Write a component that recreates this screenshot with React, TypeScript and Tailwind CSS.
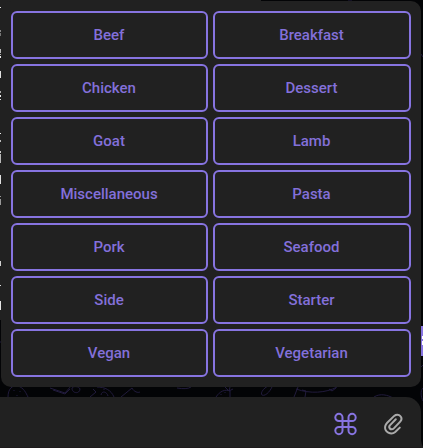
import React from "react";

const categories = [
  "Beef", "Breakfast", "Chicken", "Dessert", "Goat", "Lamb", "Miscellaneous",
  "Pasta", "Pork", "Seafood", "Side", "Starter", "Vegan", "Vegetarian",
];

// Visible edges of the message glyphs behind the keyboard panel: [top, height, colour]
const slivers: [number, number, string][] = [
  [7, 1, "#e8e8e8"], [30, 2, "#888888"], [33, 3, "#777777"],
  [49, 4, "#b8b8b8"], [54, 1, "#b0b0b0"], [56, 2, "#f0f0f0"],
  [71, 7, "#e0e0e0"], [91, 2, "#aaaaaa"], [95, 2, "#eeeeee"], [99, 1, "#dddddd"],
  [133, 1, "#eeeeee"], [140, 2, "#bbbbbb"], [151, 2, "#cccccc"], [154, 9, "#b8b8b8"],
  [175, 9, "#e0e0e0"], [196, 1, "#999999"], [199, 6, "#999999"],
  [261, 5, "#d0d0d0"], [285, 1, "#dddddd"], [301, 9, "#e4e4e4"],
];

// Chat backdrop: doodle wallpaper with the edges of the messages on it
function Backdrop() {
  return (
    <svg className="absolute inset-0 h-full w-full" viewBox="0 0 423 448" fill="none">
      <g stroke="#211b3c" strokeWidth="1">
        <path d="M8 397C8 389 12 385 18 386C24 388 26 393 28 397M14 390v1M20 391v1M17 395v1" />
        <path d="M50 388L65 393L71 386M53 390L65 394L70 389M72 388C72 394 80 394 80 389C79 386 73 386 72 388" />
        <path d="M90 397L96 392L93 389M97 387C105 387 111 390 114 397M101 395C102 390 107 392 108 396M104 389v1" />
        <path d="M121 397L132 388C134 392 138 393 140 392M177 388C183 389 188 389 191 387" />
        <path d="M216 397C220 391 225 389 230 391V397M221 394v1M225 392v1M228 390L225 387M229 391L230 387M229 391L233 389" />
        <path d="M274 384C263 386 260 394 262 395C266 397 272 389 273 384" />
        <path d="M298 387L294 397M302 390L306 391L305 397M296 389C310 394 326 393 337 387M329 389L332 391L336 388M374 397C380 393 388 395 393 398" />
        <path d="M423 388C420 391 421 397 423 401M348 0h4M421 54l2 3M0 342h2M421 367l2-2" />
      </g>
      <path d="M0 0H261V320H0Z" fill="#212121" />
      {slivers.map(([top, height, colour]) => (
        <rect key={top} x="0" y={top} width="1" height={height} fill={colour} />
      ))}
      <path d="M417 326H423V356H417Z" fill="#8774e1" />
      <path d="M422 336H423V339H422ZM422 341H423V345H422Z" fill="#ffffff" />
      <path d="M421 440Q421.5 445 423 447V448H421Z" fill="#212121" />
    </svg>
  );
}

export default function App() {
  return (
    <main className="relative flex h-[448px] w-[423px] flex-col gap-[10px] overflow-hidden bg-[#030406] pt-px">
      <Backdrop />
      <section className="relative ml-px grid h-[386px] w-[420px] grid-cols-[197px_198px] gap-[5px] rounded-[10px] bg-[#212121] p-[10px]">
        {categories.map((name) => (
          <button
            key={name}
            className="h-12 rounded-md border-2 border-[#8774e1] pr-px text-center font-[Roboto,sans-serif] text-[15px] font-medium text-[#8370da]"
          >
            {name}
          </button>
        ))}
      </section>
      <footer className="relative flex h-[51px] w-[421px] items-start gap-6 rounded-tr-[15px] border-b border-[#1e1b1c] bg-[#212121] pl-[333px] pt-[15px]">
        <svg className="h-6 w-6 shrink-0" viewBox="-0.5 0 24 24" fill="none" stroke="#8774e1" strokeWidth="2">
          <path d="M9 9V5.4A3.6 3.6 0 1 0 5.4 9H18.6A3.6 3.6 0 1 0 15 5.4V18.6A3.6 3.6 0 1 0 18.6 15H5.4A3.6 3.6 0 1 0 9 18.6Z" />
        </svg>
        <svg className="h-6 w-6 shrink-0" viewBox="0 0 24 24" fill="none" stroke="#aaaaaa" strokeWidth="2" strokeLinecap="round">
          <path d="M18.8 15.6L14.2 20C10.2 23.6 3 19.9 4.2 14.2C4.5 12.8 5.2 11.7 6.2 10.7L13.2 3.9C15 2.3 17.8 2.2 19.4 4.1C20.9 5.8 20.6 8.2 19 9.9L12.8 16.4C11.5 17.7 9.7 17.6 8.8 16.5C8 15.4 8.1 14.1 9.1 13.1L14.8 7.3" />
        </svg>
      </footer>
    </main>
  );
}
